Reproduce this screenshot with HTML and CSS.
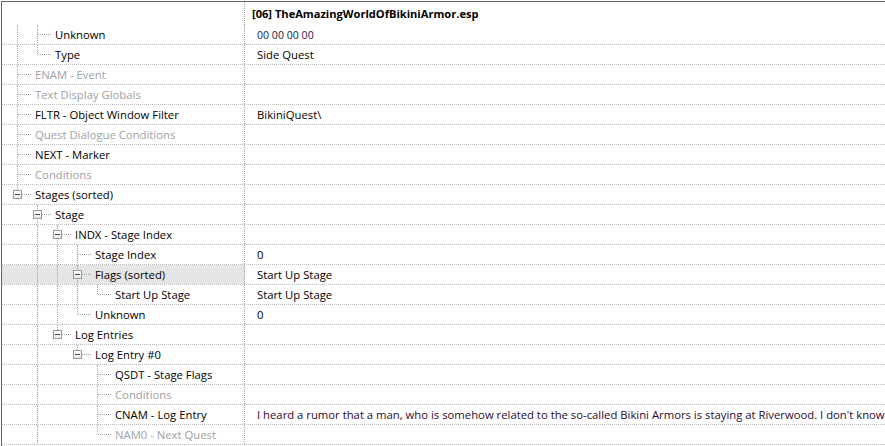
FILE: index.html
```html
<!DOCTYPE html>
<html>
<head>
<meta charset="utf-8">
<link rel="stylesheet" href="styles.css">
</head>
<body>
<div class="tree">
  <div class="row head"><div class="name"></div><div class="val">[06] TheAmazingWorldOfBikiniArmor.esp</div></div>

  <div class="row"><div class="name"><span class="g v"></span><span class="g t"></span><span class="lbl">Unknown</span></div><div class="val hex">00 00 00 00</div></div>
  <div class="row"><div class="name"><span class="g v"></span><span class="g l"></span><span class="lbl">Type</span></div><div class="val">Side Quest</div></div>
  <div class="row"><div class="name"><span class="g t"></span><span class="lbl dis">ENAM - Event</span></div><div class="val"></div></div>
  <div class="row"><div class="name"><span class="g t"></span><span class="lbl dis">Text Display Globals</span></div><div class="val"></div></div>
  <div class="row"><div class="name"><span class="g t"></span><span class="lbl">FLTR - Object Window Filter</span></div><div class="val">BikiniQuest\</div></div>
  <div class="row"><div class="name"><span class="g t"></span><span class="lbl dis">Quest Dialogue Conditions</span></div><div class="val"></div></div>
  <div class="row"><div class="name"><span class="g t"></span><span class="lbl">NEXT - Marker</span></div><div class="val"></div></div>
  <div class="row"><div class="name"><span class="g t"></span><span class="lbl dis">Conditions</span></div><div class="val"></div></div>
  <div class="row"><div class="name"><span class="g l"><i class="bx"></i></span><span class="lbl">Stages (sorted)</span></div><div class="val"></div></div>
  <div class="row"><div class="name"><span class="g"></span><span class="g t"><i class="bx"></i></span><span class="lbl">Stage</span></div><div class="val"></div></div>
  <div class="row"><div class="name"><span class="g"></span><span class="g v"></span><span class="g t"><i class="bx"></i></span><span class="lbl">INDX - Stage Index</span></div><div class="val"></div></div>
  <div class="row"><div class="name"><span class="g"></span><span class="g v"></span><span class="g v"></span><span class="g t"></span><span class="lbl">Stage Index</span></div><div class="val">0</div></div>
  <div class="row sel"><div class="name"><span class="g"></span><span class="g v"></span><span class="g v"></span><span class="g t"><i class="bx"></i></span><span class="lbl">Flags (sorted)</span></div><div class="val">Start Up Stage</div></div>
  <div class="row"><div class="name"><span class="g"></span><span class="g v"></span><span class="g v"></span><span class="g v"></span><span class="g l"></span><span class="lbl">Start Up Stage</span></div><div class="val">Start Up Stage</div></div>
  <div class="row"><div class="name"><span class="g"></span><span class="g v"></span><span class="g v"></span><span class="g l"></span><span class="lbl">Unknown</span></div><div class="val">0</div></div>
  <div class="row"><div class="name"><span class="g"></span><span class="g v"></span><span class="g l"><i class="bx"></i></span><span class="lbl">Log Entries</span></div><div class="val"></div></div>
  <div class="row"><div class="name"><span class="g"></span><span class="g v"></span><span class="g"></span><span class="g l"><i class="bx"></i></span><span class="lbl">Log Entry #0</span></div><div class="val"></div></div>
  <div class="row"><div class="name"><span class="g"></span><span class="g v"></span><span class="g"></span><span class="g"></span><span class="g t"></span><span class="lbl">QSDT - Stage Flags</span></div><div class="val"></div></div>
  <div class="row"><div class="name"><span class="g"></span><span class="g v"></span><span class="g"></span><span class="g"></span><span class="g t"></span><span class="lbl dis">Conditions</span></div><div class="val"></div></div>
  <div class="row"><div class="name"><span class="g"></span><span class="g v"></span><span class="g"></span><span class="g"></span><span class="g t"></span><span class="lbl">CNAM - Log Entry</span></div><div class="val log">I heard a rumor that a man, who is somehow related to the so-called Bikini Armors is staying at Riverwood. I don't know</div></div>
  <div class="row"><div class="name"><span class="g"></span><span class="g v"></span><span class="g"></span><span class="g"></span><span class="g l"></span><span class="lbl dis">NAM0 - Next Quest</span></div><div class="val"></div></div>
</div>
</body>
</html>
```
FILE: styles.css
```css
html, body {
  margin: 0;
  padding: 0;
  background: #ffffff;
}

.tree {
  margin: 1px 0 0 1px;
  height: 445px;
  overflow: hidden;
  border-top: 1px solid #646464;
  border-left: 1px solid #646464;
  font-family: "Open Sans", "Liberation Sans", Arial, sans-serif;
  font-size: 11.3px;
  color: #000000;
}

.row {
  display: grid;
  grid-template-columns: 243px 1fr;
  height: 20px;
  box-sizing: border-box;
  border-bottom: 1px dotted #bcbcbc;
}

.row.head {
  height: 23px;
  border-bottom: none;
}

.name {
  display: flex;
  align-items: stretch;
  box-sizing: border-box;
  padding-left: 5px;
  border-right: 1px dotted #a0a0a0;
  min-width: 0;
  overflow: hidden;
}

.row.sel .name {
  background: #e5e5e5;
}

.val {
  padding-left: 12px;
  line-height: 20px;
  white-space: nowrap;
  overflow: hidden;
}

.head .val {
  padding-left: 7px;
  line-height: 24px;
  font-size: 11.1px;
  font-weight: 700;
}

.val.hex {
  font-size: 10.6px;
  color: #1a1a3a;
}

.val.log {
  color: #2a0a2e;
}

.g {
  flex: none;
  width: 20px;
  position: relative;
}

.g.v::before,
.g.t::before {
  content: "";
  position: absolute;
  left: 10px;
  top: 0;
  bottom: -1px;
  border-left: 1px dotted #a0a0a0;
}

.g.l::before {
  content: "";
  position: absolute;
  left: 10px;
  top: 0;
  height: 9px;
  border-left: 1px dotted #a0a0a0;
}

.g.t::after,
.g.l::after {
  content: "";
  position: absolute;
  left: 11px;
  top: 9px;
  width: 13px;
  border-top: 1px dotted #a0a0a0;
}

.bx {
  position: absolute;
  left: 6px;
  top: 5px;
  width: 9px;
  height: 9px;
  box-sizing: border-box;
  border: 1px solid #9a9a9a;
  background: linear-gradient(#ffffff, #e8e8e8);
  z-index: 1;
}

.bx::after {
  content: "";
  position: absolute;
  left: 1px;
  top: 3px;
  width: 5px;
  height: 1px;
  background: #3b4a66;
}

.lbl {
  margin-left: 8px;
  line-height: 20px;
  white-space: nowrap;
}

.dis {
  color: #a0a0a0;
}
```
